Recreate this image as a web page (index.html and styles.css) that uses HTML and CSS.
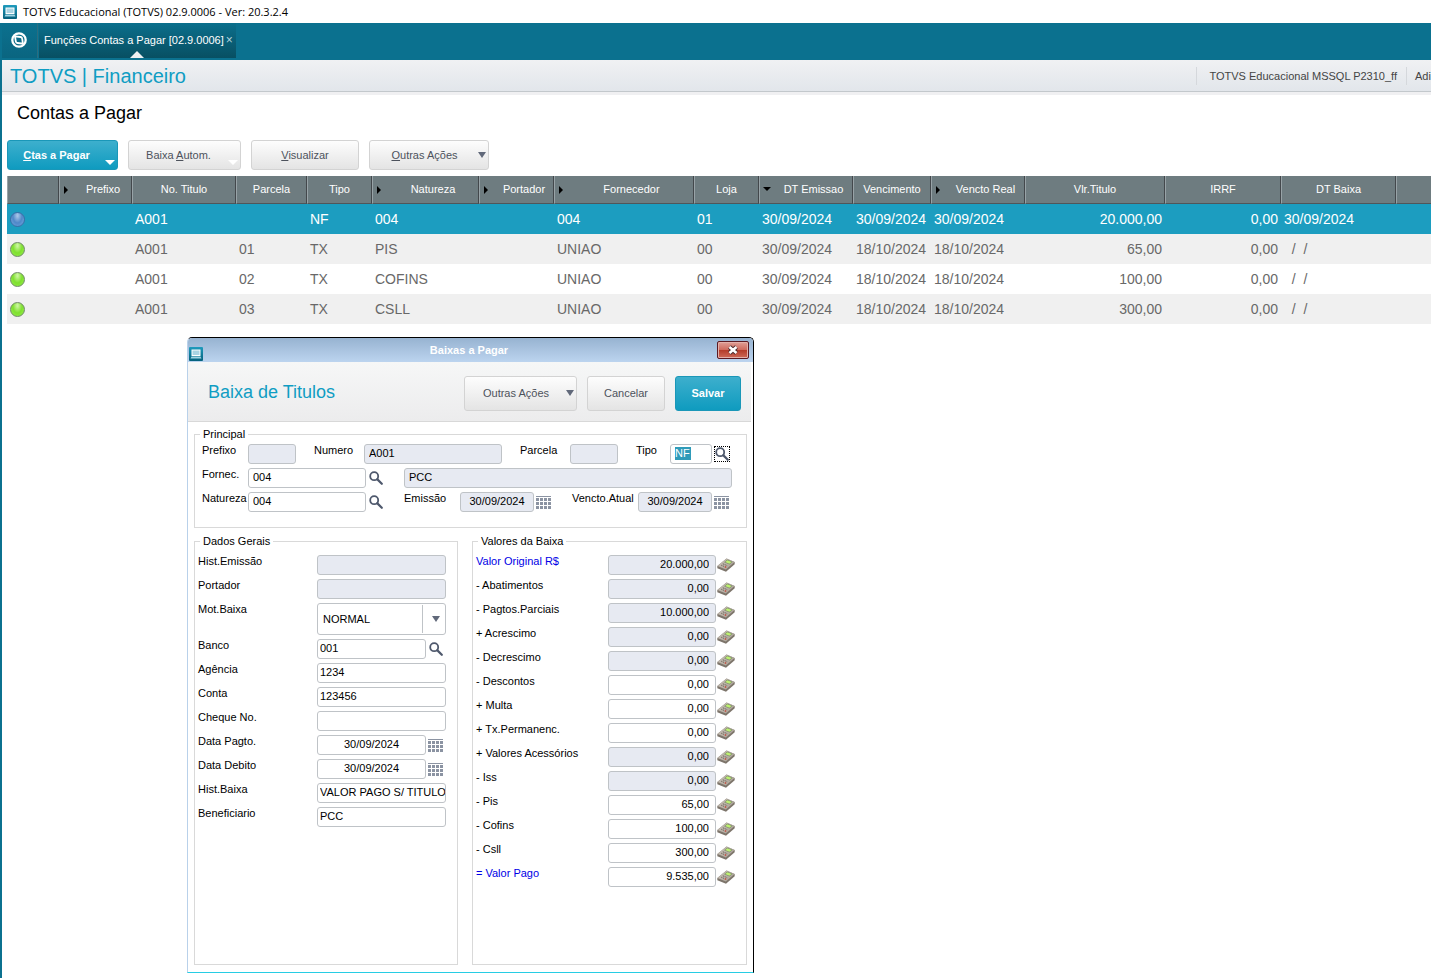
FILE: index.html
```html
<!DOCTYPE html>
<html lang="pt-BR">
<head>
  <meta charset="UTF-8">
  <meta name="viewport" content="width=device-width, initial-scale=1.0">
  <title>TOTVS Educacional</title>
  <link rel="stylesheet" href="styles.css">
</head>
<body>
  <!-- Shared icons -->
  <svg class="sprite" aria-hidden="true">
    <defs>
      <linearGradient id="appFill" x1="0" y1="0" x2="0" y2="1">
        <stop offset="0" stop-color="#1f9bbd"/>
        <stop offset="1" stop-color="#04607c"/>
      </linearGradient>
      <linearGradient id="calcFill" x1="0" y1="0" x2="1" y2="1">
        <stop offset="0" stop-color="#cfc8be"/>
        <stop offset="1" stop-color="#a59c90"/>
      </linearGradient>
    </defs>
    <symbol id="icon-app" viewBox="0 0 14 14">
      <rect width="14" height="14" rx="1" fill="url(#appFill)"/>
      <rect x="3" y="3" width="8" height="5.500" fill="#a9d4e3" stroke="#fff"/>
      <path d="M1.500 11.500h11l-1-2h-9z" fill="#9fd3e2"/>
    </symbol>
    <symbol id="icon-totvs" viewBox="0 0 16 16">
      <circle cx="8" cy="8" r="6.700" fill="none" stroke="#fff" stroke-width="2.300"/>
      <path d="M4 4.300l5.600.7c1 .2 1.500.8 1.600 1.700l.7 5-5.400-.7c-1-.1-1.600-.8-1.700-1.700z" fill="none" stroke="#fff" stroke-width="1.800"/>
    </symbol>
    <symbol id="icon-search" viewBox="0 0 14 14">
      <circle cx="5.200" cy="5.200" r="4" fill="#fff" stroke="#4e586c" stroke-width="1.800"/>
      <path d="M8.400 8.400l4.400 4.400" stroke="#4e586c" stroke-width="2.200" stroke-linecap="round"/>
    </symbol>
    <symbol id="icon-calendar" viewBox="0 0 15 13">
      <path d="M0 .5h15" stroke="#8b93a2"/>
      <path d="M0 3.500h15M0 7.500h15M0 11.500h15" stroke="#8b93a2" stroke-width="3" stroke-dasharray="3 1"/>
    </symbol>
    <symbol id="icon-calc" viewBox="0 0 18 14">
      <path d="M.3 8L9.500.6 17.700 4v2.200L9 13.700.3 10.200z" fill="#7d756b"/>
      <path d="M.5 7.900L9.600.6l7.900 3.300-8.700 7.500z" fill="url(#calcFill)"/>
      <path d="M10.300 1.600l5.400 2.200-3.200 2.700-5.400-2.200z" fill="#7f876f"/>
      <path d="M10.400 2.200l4.200 1.700-2.200 1.900-4.200-1.700z" fill="#bdf070"/>
      <path d="M5.800 5.800l4.400 1.800M4.200 7.200l2.800 1.200" stroke="#6f665d" stroke-width="1" stroke-dasharray="1.300 .7"/>
      <path d="M7.800 8.700l1.400.6" stroke="#c0483a" stroke-width="1.400"/>
    </symbol>
  </svg>

  <header class="window-title">
    <svg class="app-icon"><use href="#icon-app"/></svg>
    <span>TOTVS Educacional (TOTVS) 02.9.0006 - Ver: 20.3.2.4</span>
  </header>

  <div class="workspace">
    <nav class="tab-bar">
      <button class="home-btn" aria-label="TOTVS"><svg><use href="#icon-totvs"/></svg></button>
      <div class="tab">
        <a href="#contas">Funções Contas a Pagar [02.9.0006]</a>
        <button class="tab-close">×</button>
      </div>
    </nav>

    <div class="module-bar">
      <h1 class="module-name">TOTVS | Financeiro</h1>
      <span class="env">TOTVS Educacional MSSQL P2310_ff</span>
      <span class="user">Adi</span>
    </div>

    <main id="contas">
      <h2 class="page-title">Contas a Pagar</h2>

      <div class="toolbar">
        <button class="btn primary corner ctas"><u>C</u>tas a Pagar</button>
        <button class="btn corner baixa">Baixa <u>A</u>utom.</button>
        <button class="btn visualizar"><u>V</u>isualizar</button>
        <button class="btn dropdown outras"><u>O</u>utras Ações</button>
      </div>

      <table class="titles">
        <colgroup>
          <col class="w52"><col class="w73"><col class="w104"><col class="w71"><col class="w65"><col class="w107">
          <col class="w75"><col class="w140"><col class="w65"><col class="w94"><col class="w78"><col class="w94">
          <col class="w140"><col class="w116"><col class="w115"><col>
        </colgroup>
        <thead>
          <tr>
            <th></th>
            <th class="sortable">Prefixo</th>
            <th>No. Titulo</th>
            <th>Parcela</th>
            <th>Tipo</th>
            <th class="sortable">Natureza</th>
            <th class="sortable">Portador</th>
            <th class="sortable">Fornecedor</th>
            <th>Loja</th>
            <th class="sortable sorted">DT Emissao</th>
            <th>Vencimento</th>
            <th class="sortable">Vencto Real</th>
            <th>Vlr.Titulo</th>
            <th>IRRF</th>
            <th>DT Baixa</th>
            <th></th>
          </tr>
        </thead>
        <tbody>
          <tr class="selected">
            <td><span class="status blue"></span></td><td></td><td>A001</td><td></td><td>NF</td><td>004</td><td></td><td>004</td><td>01</td>
            <td>30/09/2024</td><td>30/09/2024</td><td>30/09/2024</td><td class="num">20.000,00</td><td class="num">0,00</td><td>30/09/2024</td><td></td>
          </tr>
          <tr>
            <td><span class="status"></span></td><td></td><td>A001</td><td>01</td><td>TX</td><td>PIS</td><td></td><td>UNIAO</td><td>00</td>
            <td>30/09/2024</td><td>18/10/2024</td><td>18/10/2024</td><td class="num">65,00</td><td class="num">0,00</td><td class="empty-date">  /  /</td><td></td>
          </tr>
          <tr>
            <td><span class="status"></span></td><td></td><td>A001</td><td>02</td><td>TX</td><td>COFINS</td><td></td><td>UNIAO</td><td>00</td>
            <td>30/09/2024</td><td>18/10/2024</td><td>18/10/2024</td><td class="num">100,00</td><td class="num">0,00</td><td class="empty-date">  /  /</td><td></td>
          </tr>
          <tr>
            <td><span class="status"></span></td><td></td><td>A001</td><td>03</td><td>TX</td><td>CSLL</td><td></td><td>UNIAO</td><td>00</td>
            <td>30/09/2024</td><td>18/10/2024</td><td>18/10/2024</td><td class="num">300,00</td><td class="num">0,00</td><td class="empty-date">  /  /</td><td></td>
          </tr>
        </tbody>
      </table>
    </main>
  </div>

  <section class="dialog" role="dialog">
    <div class="dialog-title">
      <svg class="app-icon"><use href="#icon-app"/></svg>
      <span>Baixas a Pagar</span>
      <button class="dialog-close" aria-label="Fechar">
        <svg viewBox="0 0 12 10"><path d="M2.500 2l7 6M9.500 2l-7 6" stroke="#4a2a2c" stroke-width="4.400"/><path d="M2.500 2l7 6M9.500 2l-7 6" stroke="#fff" stroke-width="2.600"/></svg>
      </button>
    </div>

    <div class="dialog-head">
      <h2>Baixa de Titulos</h2>
      <button class="btn dropdown acoes">Outras Ações</button>
      <button class="btn cancelar">Cancelar</button>
      <button class="btn primary salvar">Salvar</button>
    </div>

    <form class="dialog-body">
      <fieldset class="principal">
        <legend>Principal</legend>
        <div class="row row-titulo">
          <label for="prefixo">Prefixo</label>
          <input id="prefixo" readonly>
          <label for="numero">Numero</label>
          <input id="numero" value="A001" readonly>
          <label for="parcela">Parcela</label>
          <input id="parcela" readonly>
          <label for="tipo">Tipo</label>
          <input id="tipo" class="marked" value="NF">
          <button type="button" class="icon-btn focused" aria-label="Pesquisar"><svg class="i-search"><use href="#icon-search"/></svg></button>
        </div>
        <div class="row row-fornec">
          <label for="fornec">Fornec.</label>
          <input id="fornec" value="004">
          <button type="button" class="icon-btn" aria-label="Pesquisar"><svg class="i-search"><use href="#icon-search"/></svg></button>
          <input value="PCC" aria-label="Nome" readonly>
        </div>
        <div class="row row-natureza">
          <label for="natureza">Natureza</label>
          <input id="natureza" value="004">
          <button type="button" class="icon-btn" aria-label="Pesquisar"><svg class="i-search"><use href="#icon-search"/></svg></button>
          <label for="emissao">Emissão</label>
          <input id="emissao" class="date" value="30/09/2024" readonly>
          <button type="button" class="icon-btn" aria-label="Calendário"><svg class="i-calendar"><use href="#icon-calendar"/></svg></button>
          <label for="vencto">Vencto.Atual</label>
          <input id="vencto" class="date" value="30/09/2024" readonly>
          <button type="button" class="icon-btn" aria-label="Calendário"><svg class="i-calendar"><use href="#icon-calendar"/></svg></button>
        </div>
      </fieldset>

      <div class="columns">
        <fieldset class="dados">
          <legend>Dados Gerais</legend>
          <div class="row"><label for="histemissao">Hist.Emissão</label><input id="histemissao" class="wide" readonly></div>
          <div class="row"><label for="portador">Portador</label><input id="portador" class="wide" readonly></div>
          <div class="row">
            <label for="motbaixa">Mot.Baixa</label>
            <div class="select wide"><select id="motbaixa"><option>NORMAL</option></select></div>
          </div>
          <div class="row">
            <label for="banco">Banco</label><input id="banco" value="001">
            <button type="button" class="icon-btn" aria-label="Pesquisar"><svg class="i-search"><use href="#icon-search"/></svg></button>
          </div>
          <div class="row"><label for="agencia">Agência</label><input id="agencia" class="wide" value="1234"></div>
          <div class="row"><label for="conta">Conta</label><input id="conta" class="wide" value="123456"></div>
          <div class="row"><label for="cheque">Cheque No.</label><input id="cheque" class="wide"></div>
          <div class="row">
            <label for="pagto">Data Pagto.</label><input id="pagto" class="date" value="30/09/2024">
            <button type="button" class="icon-btn" aria-label="Calendário"><svg class="i-calendar"><use href="#icon-calendar"/></svg></button>
          </div>
          <div class="row">
            <label for="debito">Data Debito</label><input id="debito" class="date" value="30/09/2024">
            <button type="button" class="icon-btn" aria-label="Calendário"><svg class="i-calendar"><use href="#icon-calendar"/></svg></button>
          </div>
          <div class="row"><label for="histbaixa">Hist.Baixa</label><input id="histbaixa" class="wide" value="VALOR PAGO S/ TITULO"></div>
          <div class="row"><label for="benef">Beneficiario</label><input id="benef" class="wide" value="PCC"></div>
        </fieldset>

        <fieldset class="valores">
          <legend>Valores da Baixa</legend>
          <div class="row"><label class="total" for="original">Valor Original R$</label><input id="original" value="20.000,00" readonly><button type="button" class="icon-btn" aria-label="Calculadora"><svg class="i-calc"><use href="#icon-calc"/></svg></button></div>
          <div class="row"><label for="abat">- Abatimentos</label><input id="abat" value="0,00" readonly><button type="button" class="icon-btn" aria-label="Calculadora"><svg class="i-calc"><use href="#icon-calc"/></svg></button></div>
          <div class="row"><label for="parciais">- Pagtos.Parciais</label><input id="parciais" value="10.000,00" readonly><button type="button" class="icon-btn" aria-label="Calculadora"><svg class="i-calc"><use href="#icon-calc"/></svg></button></div>
          <div class="row"><label for="acresc">+ Acrescimo</label><input id="acresc" value="0,00" readonly><button type="button" class="icon-btn" aria-label="Calculadora"><svg class="i-calc"><use href="#icon-calc"/></svg></button></div>
          <div class="row"><label for="decresc">- Decrescimo</label><input id="decresc" value="0,00" readonly><button type="button" class="icon-btn" aria-label="Calculadora"><svg class="i-calc"><use href="#icon-calc"/></svg></button></div>
          <div class="row"><label for="desc">- Descontos</label><input id="desc" value="0,00"><button type="button" class="icon-btn" aria-label="Calculadora"><svg class="i-calc"><use href="#icon-calc"/></svg></button></div>
          <div class="row"><label for="multa">+ Multa</label><input id="multa" value="0,00"><button type="button" class="icon-btn" aria-label="Calculadora"><svg class="i-calc"><use href="#icon-calc"/></svg></button></div>
          <div class="row"><label for="perm">+ Tx.Permanenc.</label><input id="perm" value="0,00"><button type="button" class="icon-btn" aria-label="Calculadora"><svg class="i-calc"><use href="#icon-calc"/></svg></button></div>
          <div class="row"><label for="acess">+ Valores Acessórios</label><input id="acess" value="0,00" readonly><button type="button" class="icon-btn" aria-label="Calculadora"><svg class="i-calc"><use href="#icon-calc"/></svg></button></div>
          <div class="row"><label for="iss">- Iss</label><input id="iss" value="0,00" readonly><button type="button" class="icon-btn" aria-label="Calculadora"><svg class="i-calc"><use href="#icon-calc"/></svg></button></div>
          <div class="row"><label for="pis">- Pis</label><input id="pis" value="65,00"><button type="button" class="icon-btn" aria-label="Calculadora"><svg class="i-calc"><use href="#icon-calc"/></svg></button></div>
          <div class="row"><label for="cofins">- Cofins</label><input id="cofins" value="100,00"><button type="button" class="icon-btn" aria-label="Calculadora"><svg class="i-calc"><use href="#icon-calc"/></svg></button></div>
          <div class="row"><label for="csll">- Csll</label><input id="csll" value="300,00"><button type="button" class="icon-btn" aria-label="Calculadora"><svg class="i-calc"><use href="#icon-calc"/></svg></button></div>
          <div class="row"><label class="total" for="pago">= Valor Pago</label><input id="pago" value="9.535,00"><button type="button" class="icon-btn" aria-label="Calculadora"><svg class="i-calc"><use href="#icon-calc"/></svg></button></div>
        </fieldset>
      </div>
    </form>
  </section>
</body>
</html>
```
FILE: styles.css
```css
* {
  box-sizing: border-box;
  margin: 0;
  padding: 0;
}

body {
  background: #fff;
  color: #000;
  font-family: "Liberation Sans", Arial, sans-serif;
  font-size: 11px;
  min-height: 100vh;
  display: flex;
  flex-direction: column;
  position: relative;
  overflow: hidden;
}

button,
input,
select {
  font-family: inherit;
  font-size: 11px;
}

button {
  border: none;
  background: none;
}

.sprite {
  position: absolute;
  width: 0;
  height: 0;
}

.app-icon {
  width: 14px;
  height: 14px;
  flex: none;
}

.window-title {
  display: flex;
  align-items: center;
  gap: 6px;
  height: 23px;
  padding-left: 3px;
  font-family: "Open Sans", sans-serif;
  font-size: 11px;
}

.workspace {
  flex: 1;
  border-left: 2px solid #0b718f;
}

/* Tabs */
.tab-bar {
  display: flex;
  height: 37px;
  background: #0b718f;
}

.home-btn {
  width: 36px;
  height: 35px;
  display: flex;
  align-items: center;
  justify-content: center;
  padding: 0 1px 2px 0;
  border-right: 1px solid #2c6d7f;
  background: linear-gradient(#0b718f, #0a6580);
}

.home-btn svg {
  width: 16px;
  height: 16px;
}

.tab {
  position: relative;
  display: flex;
  align-items: center;
  gap: 2px;
  height: 35px;
  margin-left: 1px;
  padding: 0 3px 1px 5px;
  background: linear-gradient(#0b6f8c, #084f62);
}

.tab a {
  color: #fff;
  text-decoration: none;
}

.tab-close {
  color: #b5d3dc;
  font-size: 12px;
}

.tab::after {
  content: "";
  position: absolute;
  bottom: 0;
  left: 50%;
  margin-left: -7px;
  border: 7px solid transparent;
  border-top: none;
  border-bottom-color: #eef0f2;
}

/* Module bar */
.module-bar {
  display: flex;
  align-items: center;
  height: 35px;
  padding: 0 0 3px 8px;
  background: linear-gradient(#f0f1f3, #e2e6eb 31px, #c3c8cc 31px, #c3c8cc 32px, #f0f0f2 32px);
  color: #444;
  white-space: nowrap;
}

.module-name {
  flex: 1;
  color: #0f9dc3;
  font-size: 20px;
  font-weight: 400;
}

.env,
.user {
  border-left: 1px solid #d5d8dc;
  line-height: 18px;
}

.env {
  padding: 0 9px 0 12px;
}

.user {
  width: 25px;
  padding-left: 8px;
}

.page-title {
  padding: 7px 15px 0;
  font-size: 18px;
  font-weight: 400;
  line-height: 22px;
}

/* Buttons */
.toolbar {
  display: flex;
  gap: 10px;
  padding: 16px 5px 6px;
}

.btn {
  position: relative;
  height: 30px;
  border: 1px solid #d3d3d3;
  border-radius: 3px;
  background: linear-gradient(#fdfdfd, #e4e4e4);
  color: #4d525c;
}

.btn.primary {
  border-color: #1a97b8;
  background: linear-gradient(#3dafcd, #0f9bbf);
  color: #fff;
  font-weight: 700;
}

.btn.corner {
  padding-right: 12px;
}

.btn.dropdown {
  padding-right: 9px;
}

.btn.corner::after,
.btn.dropdown::after {
  content: "";
  position: absolute;
  border: 5px solid transparent;
  border-bottom: none;
}

.btn.corner::after {
  right: 2px;
  bottom: 4px;
  border-top-color: #fff;
}

.btn.dropdown::after {
  right: 2px;
  top: 50%;
  margin-top: -3px;
  border-width: 6px 4px 0;
  border-top-color: #61697a;
}

.ctas { width: 111px; }
.baixa { width: 113px; }
.visualizar { width: 108px; }
.outras { width: 120px; }
.acoes { width: 113px; }
.cancelar { width: 78px; }
.salvar { width: 66px; }

/* Titles table */
.titles {
  width: calc(100% - 5px);
  margin-left: 5px;
  table-layout: fixed;
  border-collapse: separate;
  border-spacing: 0;
}

.w52 { width: 52px; }
.w65 { width: 65px; }
.w71 { width: 71px; }
.w73 { width: 73px; }
.w75 { width: 75px; }
.w78 { width: 78px; }
.w94 { width: 94px; }
.w104 { width: 104px; }
.w107 { width: 107px; }
.w115 { width: 115px; }
.w116 { width: 116px; }
.w140 { width: 140px; }

.titles th {
  position: relative;
  height: 28px;
  padding-bottom: 2px;
  border-left: 1px solid #98a3a7;
  border-right: 1px solid #43484c;
  border-bottom: 1px solid #50565a;
  background: #6e7c80;
  color: #fff;
  font-weight: 400;
  white-space: nowrap;
}

.titles th:last-child {
  border-right: none;
}

.titles th.sortable {
  padding-left: 15px;
}

.titles th.sortable::before {
  content: "";
  position: absolute;
  left: 4px;
  top: 10px;
  border: 4px solid transparent;
  border-left-color: #000;
  border-right: none;
}

.titles th.sorted::before {
  left: 3px;
  top: 11px;
  border: 4px solid transparent;
  border-top-color: #000;
  border-bottom: none;
}

.titles td {
  height: 30px;
  padding: 0 3px;
  color: #686868;
  font-size: 14px;
  white-space: nowrap;
}

.titles tbody tr:nth-child(even) {
  background: #f0f0f0;
}

.titles tr.selected {
  background: #1c9dc0;
}

.titles tr.selected td {
  color: #fff;
}

.titles td.num {
  text-align: right;
}

.titles td.empty-date {
  white-space: pre;
}

.status {
  display: block;
  width: 15px;
  height: 15px;
  border: 1px solid #6f8a66;
  border-radius: 50%;
  background: radial-gradient(ellipse at 50% 20%, #c9f59c 5%, #7fe02f 50%, #93ee4a 90%);
}

.status.blue {
  border-color: #3a6da6;
  background: radial-gradient(ellipse at 50% 20%, #a5c3e6 5%, #4f88c8 50%, #6fa3dc 90%);
}

/* Dialog window */
.dialog {
  position: absolute;
  left: 187px;
  top: 337px;
  width: 567px;
  min-height: 636px;
  display: flex;
  flex-direction: column;
  border: 1px solid #000;
  border-left-color: #b9d1ea;
  border-bottom-color: #27cde4;
  border-radius: 5px 5px 0 0;
  background: #fff;
  overflow: hidden;
}

.dialog-title {
  display: grid;
  grid-template-columns: 32px 1fr 32px;
  align-items: center;
  height: 24px;
  padding: 0 4px 0 1px;
  background: linear-gradient(#97b3d1, #bcd4ef);
  color: #fff;
  font-weight: 700;
  text-align: center;
}

.dialog-title .app-icon {
  align-self: end;
  margin-bottom: 1px;
}

.dialog-close {
  width: 32px;
  height: 18px;
  display: flex;
  align-items: center;
  justify-content: center;
  border: 1px solid #5c1a22;
  border-radius: 2px;
  background: linear-gradient(#e0a097, #cf6b5e 48%, #b33a28 50%, #cf6a58);
  box-shadow: inset 0 0 0 1px #e3b0aa;
}

.dialog-close svg {
  width: 12px;
  height: 10px;
}

.dialog-head {
  display: flex;
  align-items: center;
  gap: 10px;
  height: 60px;
  margin-right: 2px;
  padding: 3px 10px 0 20px;
  border-bottom: 1px solid #d8d8d8;
  background: linear-gradient(#f6f7f7, #ececed);
}

.dialog-head h2 {
  flex: 1;
  padding-bottom: 2px;
  color: #0f9dc3;
  font-size: 18px;
  font-weight: 400;
}

.dialog-head .btn {
  height: 35px;
}

.dialog-body {
  flex: 1;
  display: flex;
  flex-direction: column;
  gap: 6px;
  padding: 5px 6px 7px;
}

.columns {
  flex: 1;
  display: grid;
  grid-template-columns: 264px 1fr;
  gap: 14px;
}

fieldset {
  min-width: 0;
  border: 1px solid #d9d9d9;
}

legend {
  margin-left: 2px;
  padding: 0 3px;
  line-height: 14px;
}

.principal {
  padding: 3px 14px 11px 7px;
}

.principal legend {
  margin-left: -2px;
}

.dados {
  padding: 7px 11px 0 3px;
}

.valores {
  padding: 7px 10px 0 3px;
}

.row {
  display: grid;
  align-items: start;
  margin-bottom: 4px;
}

.row-titulo {
  grid-template-columns: 46px 48px 68px 1fr 68px 48px 52px 42px 20px;
}

.row-titulo input + label {
  padding-left: 18px;
}

.row-fornec {
  grid-template-columns: 46px 118px 38px 1fr;
}

.row-natureza {
  grid-template-columns: 46px 118px 38px 56px 1fr 38px 66px 74px 20px;
}

.dados .row {
  grid-template-columns: 119px 1fr 20px;
}

.valores .row {
  grid-template-columns: 132px 1fr 20px;
}

.wide {
  grid-column: 2 / 4;
}

label {
  line-height: 12px;
  white-space: nowrap;
}

label.total {
  color: #0000e6;
}

input,
select {
  width: 100%;
  min-width: 0;
  height: 20px;
  padding: 0 0 2px 4px;
  border: 1px solid #bfc3c7;
  border-radius: 3px;
  background: #fff;
  color: #000;
}

input[readonly] {
  background: #e7eaf2;
}

.dados input {
  padding-left: 2px;
}

.dados .date,
.date {
  padding-left: 0;
  text-align: center;
}

.valores input {
  padding-right: 6px;
  text-align: right;
}

.marked {
  background: linear-gradient(#2f9bb9, #2f9bb9) no-repeat 4px 2px / 16px 13px #fff;
  color: #fff;
}

.select {
  position: relative;
}

.select select {
  display: block;
  height: 32px;
  padding: 0 5px;
  appearance: none;
  background: linear-gradient(#bfc3c7, #bfc3c7) no-repeat right 22px center / 1px 28px #fff;
}

.select::after {
  content: "";
  position: absolute;
  right: 6px;
  top: 13px;
  border: 4px solid transparent;
  border-top: 6px solid #61697a;
  border-bottom: none;
  pointer-events: none;
}

.icon-btn {
  display: flex;
  align-items: center;
  height: 20px;
  padding-left: 2px;
}

.icon-btn.focused svg {
  outline: 1px dotted #000;
}

.i-search {
  width: 14px;
  height: 14px;
  margin-left: 1px;
}

.i-calendar {
  width: 15px;
  height: 13px;
}

.valores .icon-btn {
  padding-left: 1px;
}

.i-calc {
  width: 18px;
  height: 14px;
}
```
